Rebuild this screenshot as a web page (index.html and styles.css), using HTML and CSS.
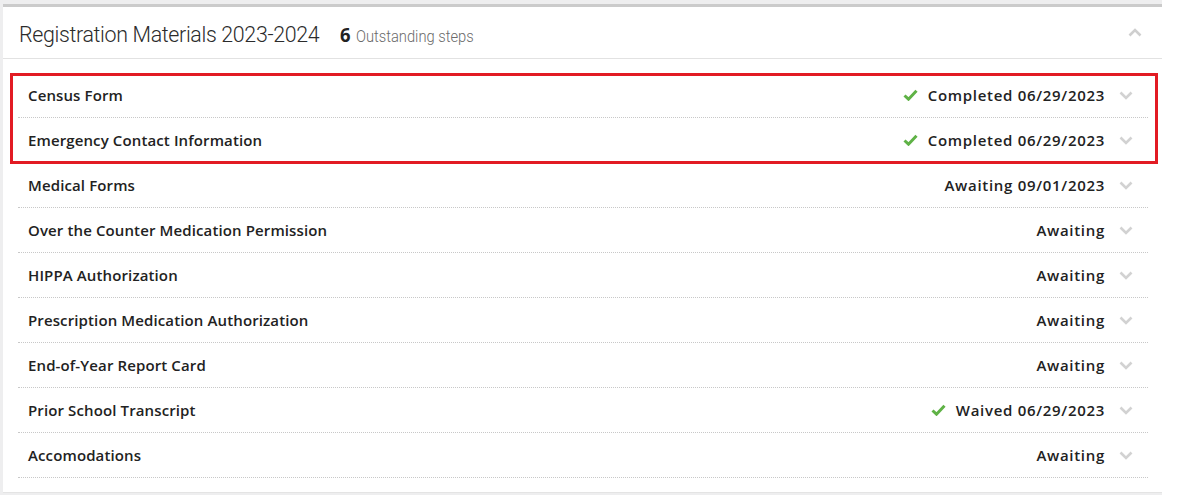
FILE: index.html
```html
<!DOCTYPE html>
<html>
<head>
<meta charset="utf-8">
<link rel="stylesheet" href="styles.css">
</head>
<body>
<div class="page">
  <section class="card">
    <header class="card-head">
      <h1 class="title">Registration Materials 2023-2024</h1>
      <span class="count"><b>6</b> Outstanding steps</span>
      <svg class="chev-up" width="14" height="9" viewBox="0 0 14 9"><path d="M1.5 7.5 L7 2 L12.5 7.5" fill="none" stroke="#cfcfcf" stroke-width="2.6"/></svg>
    </header>
    <div class="list">
      <div class="highlight">
        <div class="row"><span class="name">Census Form</span><span class="status"><svg class="check" width="15" height="12" viewBox="0 0 15 12"><path d="M1.5 6.5 L5.5 10.2 L13.5 1.8" fill="none" stroke="#5fb246" stroke-width="3"/></svg>Completed 06/29/2023</span><svg class="chev" width="14" height="9" viewBox="0 0 14 9"><path d="M1.5 1.5 L7 7 L12.5 1.5" fill="none" stroke="#d2d2d2" stroke-width="2.6"/></svg></div>
        <div class="row"><span class="name">Emergency Contact Information</span><span class="status"><svg class="check" width="15" height="12" viewBox="0 0 15 12"><path d="M1.5 6.5 L5.5 10.2 L13.5 1.8" fill="none" stroke="#5fb246" stroke-width="3"/></svg>Completed 06/29/2023</span><svg class="chev" width="14" height="9" viewBox="0 0 14 9"><path d="M1.5 1.5 L7 7 L12.5 1.5" fill="none" stroke="#d2d2d2" stroke-width="2.6"/></svg></div>
      </div>
      <div class="row"><span class="name">Medical Forms</span><span class="status">Awaiting 09/01/2023</span><svg class="chev" width="14" height="9" viewBox="0 0 14 9"><path d="M1.5 1.5 L7 7 L12.5 1.5" fill="none" stroke="#d2d2d2" stroke-width="2.6"/></svg></div>
      <div class="row"><span class="name">Over the Counter Medication Permission</span><span class="status">Awaiting</span><svg class="chev" width="14" height="9" viewBox="0 0 14 9"><path d="M1.5 1.5 L7 7 L12.5 1.5" fill="none" stroke="#d2d2d2" stroke-width="2.6"/></svg></div>
      <div class="row"><span class="name">HIPPA Authorization</span><span class="status">Awaiting</span><svg class="chev" width="14" height="9" viewBox="0 0 14 9"><path d="M1.5 1.5 L7 7 L12.5 1.5" fill="none" stroke="#d2d2d2" stroke-width="2.6"/></svg></div>
      <div class="row"><span class="name">Prescription Medication Authorization</span><span class="status">Awaiting</span><svg class="chev" width="14" height="9" viewBox="0 0 14 9"><path d="M1.5 1.5 L7 7 L12.5 1.5" fill="none" stroke="#d2d2d2" stroke-width="2.6"/></svg></div>
      <div class="row"><span class="name">End-of-Year Report Card</span><span class="status">Awaiting</span><svg class="chev" width="14" height="9" viewBox="0 0 14 9"><path d="M1.5 1.5 L7 7 L12.5 1.5" fill="none" stroke="#d2d2d2" stroke-width="2.6"/></svg></div>
      <div class="row"><span class="name">Prior School Transcript</span><span class="status"><svg class="check" width="15" height="12" viewBox="0 0 15 12"><path d="M1.5 6.5 L5.5 10.2 L13.5 1.8" fill="none" stroke="#5fb246" stroke-width="3"/></svg>Waived 06/29/2023</span><svg class="chev" width="14" height="9" viewBox="0 0 14 9"><path d="M1.5 1.5 L7 7 L12.5 1.5" fill="none" stroke="#d2d2d2" stroke-width="2.6"/></svg></div>
      <div class="row"><span class="name">Accomodations</span><span class="status">Awaiting</span><svg class="chev" width="14" height="9" viewBox="0 0 14 9"><path d="M1.5 1.5 L7 7 L12.5 1.5" fill="none" stroke="#d2d2d2" stroke-width="2.6"/></svg></div>
    </div>
  </section>
</div>
</body>
</html>
```

FILE: styles.css
```css
html, body {
  margin: 0;
  padding: 0;
  background: #ffffff;
}
.page {
  width: 1159px;
  padding: 4px 0 2px 3px;
  background: #eeeeef;
}
.card {
  background: #fff;
  border-top: 3px solid #cbcbcb;
  border-bottom: 1px solid #e4e4e4;
  padding: 0 14px 14px 15px;
  font-family: "Open Sans", sans-serif;
}
.card-head {
  display: flex;
  align-items: center;
  height: 52px;
  box-sizing: border-box;
  border-bottom: 1px solid #e2e2e2;
  margin: 0 -14px 14px -15px;
  padding: 4px 20px 0 16px;
}
.title {
  margin: 0 12px 0 0;
  font-family: Roboto, sans-serif;
  font-weight: 300;
  font-size: 22px;
  letter-spacing: -0.35px;
  color: #2b2b2b;
  transform: scaleX(0.972);
  transform-origin: left center;
}
.count {
  font-family: Roboto, sans-serif;
  font-weight: 300;
  font-size: 16px;
  color: #6a6a6a;
  transform: scaleX(0.92);
  transform-origin: left center;
}
.count b {
  font-family: "Open Sans", sans-serif;
  font-weight: 700;
  font-size: 20px;
  color: #222;
  margin-right: 2px;
}
.chev-up {
  margin-left: auto;
  margin-top: -5px;
}
.highlight {
  position: relative;
}
.highlight::after {
  content: "";
  position: absolute;
  top: 0;
  bottom: -1px;
  left: -8px;
  right: -10px;
  border: 3px solid #e21b23;
  pointer-events: none;
}
.row {
  display: flex;
  align-items: center;
  height: 45px;
  box-sizing: border-box;
  border-bottom: 1px dotted #c8c8c8;
  padding: 0 15px 0 10px;
  font-size: 15px;
  font-weight: 600;
  color: #222;
}
.name {
  flex: 1;
  letter-spacing: 0.12px;
}
.status {
  display: flex;
  align-items: center;
  gap: 10px;
  letter-spacing: 0.7px;
}
.chev {
  margin-left: 14px;
  margin-top: 1px;
}
```
